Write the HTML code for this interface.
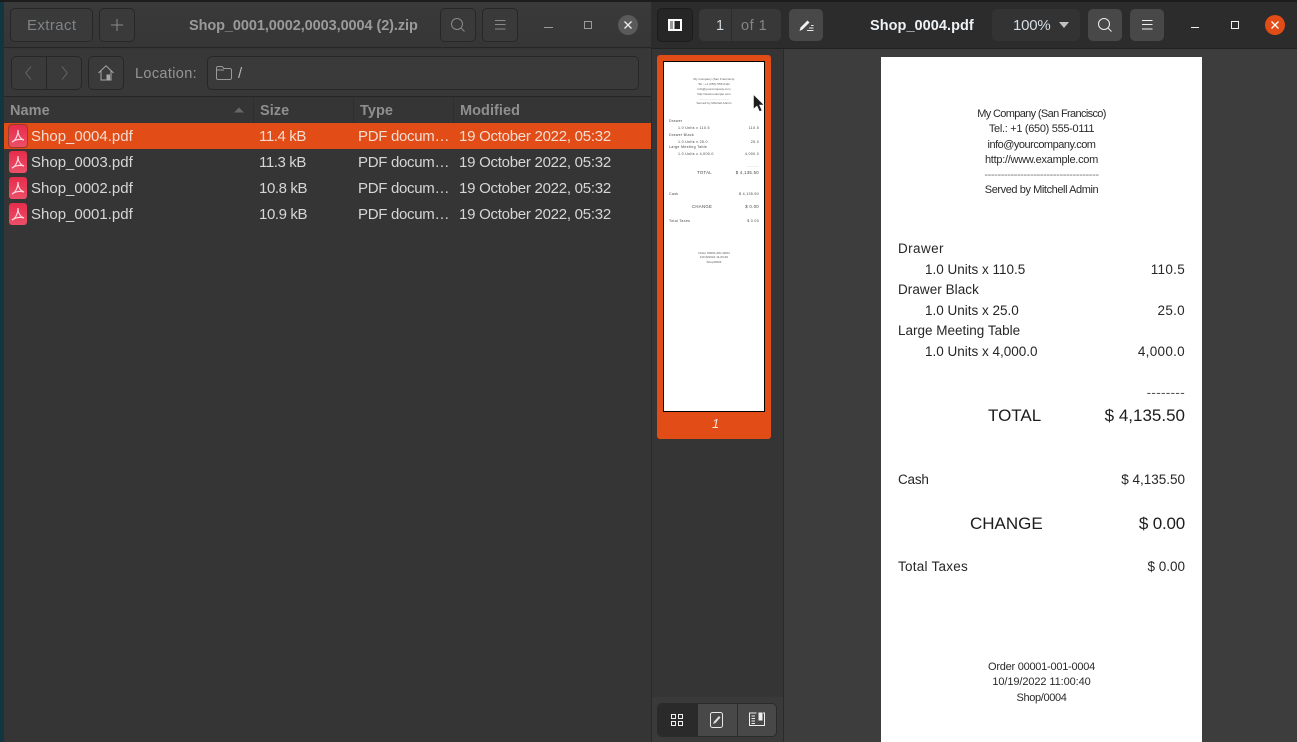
<!DOCTYPE html>
<html><head><meta charset="utf-8">
<style>
*{box-sizing:border-box}
html,body{margin:0;padding:0;width:1297px;height:742px;overflow:hidden;background:#2c2c2c;font-family:"Liberation Sans",sans-serif}
.a{position:absolute}
.t{position:absolute;white-space:nowrap;line-height:18px;height:18px;margin-top:1px}
.btn{position:absolute;border:1px solid #272727;border-radius:5px}
.f{font-size:15px;color:#d6d6d6;letter-spacing:0}
.s{letter-spacing:-.4px}
.ty{letter-spacing:-.3px}
.d{letter-spacing:-.26px}
.sel{color:#f3ddd2}
.h{font-size:14.5px;font-weight:bold;color:#8f8f8f;letter-spacing:.05px}
.ic{position:absolute;left:9px;width:18px;height:22px;border-radius:3px;background:linear-gradient(#e62c4b,#ec4f68)}
svg{position:absolute;overflow:visible}
.r{position:absolute;white-space:nowrap;color:#262626;font-size:13.5px;line-height:16px;height:16px;letter-spacing:0;margin-top:1px}
.rr{text-align:right;right:17px}
.c{text-align:center;left:0;width:321px;font-size:11px;color:#2a2a2a}
.b{font-size:17px;line-height:20px;height:20px;color:#1c1c1c;letter-spacing:0}
.m{position:absolute;white-space:nowrap;font-size:3.6px;line-height:4px;height:4px;color:#444;letter-spacing:.3px}
.mr{right:5px}
.mc{left:0;width:100px;text-align:center;font-size:3px;color:#555;letter-spacing:.05px}
</style></head><body>

<!-- Left window -->
<div class="a" style="left:0;top:0;width:4px;height:742px;background:#12363f"></div>
<div class="a" style="left:4px;top:0;width:647px;height:742px;background:#353535"></div>
<div class="a" style="left:0;top:0;width:1297px;height:2px;background:#1c1c1c"></div>
<div class="a" style="left:4px;top:2px;width:647px;height:46px;background:linear-gradient(#3a3a3a,#363636);border-bottom:1px solid #262626"></div>
<div class="a" style="left:4px;top:49px;width:647px;height:48px;background:#383838;border-bottom:1px solid #262626"></div>

<div class="btn" style="left:10px;top:8px;width:83px;height:34px;background:#3a3a3a"></div>
<div class="t" style="left:27px;top:16px;font-size:15px;color:#7f8488;letter-spacing:.4px">Extract</div>
<div class="btn" style="left:99px;top:8px;width:36px;height:34px;background:#3a3a3a"></div>
<svg style="left:111px;top:19px" width="12" height="12"><path d="M6 0V12M0 6H12" stroke="#8a8a8a" stroke-width="1"/></svg>

<div class="t" style="left:189px;top:16px;font-size:14.5px;font-weight:bold;color:#9a9a9a;letter-spacing:-.08px">Shop_0001,0002,0003,0004 (2).zip</div>

<div class="btn" style="left:440px;top:8px;width:36px;height:34px;background:#3a3a3a"></div>
<svg style="left:451px;top:18px" width="14" height="14"><circle cx="6" cy="6" r="5.5" fill="none" stroke="#8a8a8a"/><path d="M10 10L13.5 13.5" stroke="#8a8a8a"/></svg>
<div class="btn" style="left:482px;top:8px;width:36px;height:34px;background:#3a3a3a"></div>
<svg style="left:495px;top:19px" width="11" height="11"><path d="M0 1.5H10.5M0 5.5H10.5M0 10H10.5" stroke="#8a8a8a"/></svg>

<div class="a" style="left:544px;top:27px;width:9px;height:1px;background:#9a9a9a"></div>
<div class="a" style="left:584px;top:21px;width:8px;height:8px;border:1px solid #9a9a9a"></div>
<div class="a" style="left:618px;top:15px;width:20px;height:20px;border-radius:50%;background:#5a5a5a"></div>
<svg style="left:624px;top:21px" width="8" height="8"><path d="M.5 .5L7.5 7.5M7.5 .5L.5 7.5" stroke="#eee" stroke-width="1.3"/></svg>

<!-- location bar -->
<div class="btn" style="left:11px;top:56px;width:71px;height:34px;background:#3a3a3a"></div>
<div class="a" style="left:46px;top:57px;width:1px;height:32px;background:#272727"></div>
<svg style="left:25px;top:66px" width="8" height="14"><path d="M6 .5L.8 7L6 13.5" fill="none" stroke="#666"/></svg>
<svg style="left:61px;top:66px" width="8" height="14"><path d="M1 .5L6.2 7L1 13.5" fill="none" stroke="#666"/></svg>
<div class="btn" style="left:88px;top:56px;width:36px;height:34px;background:#3a3a3a"></div>
<svg style="left:98px;top:65px" width="16" height="16"><path d="M.5 8L8 .8L15.5 8M3 6V15H13V6" fill="none" stroke="#a8a8a8"/><rect x="8.5" y="9.5" width="3.5" height="5.5" fill="#a8a8a8"/></svg>
<div class="t" style="left:135px;top:64px;font-size:14.5px;color:#959595;letter-spacing:.35px">Location:</div>
<div class="btn" style="left:207px;top:56px;width:432px;height:34px;background:#3a3a3a"></div>
<svg style="left:216px;top:66px" width="16" height="14"><path d="M2 .5H6L8 2.5H14A1.5 1.5 0 0 1 15.5 4V12A1.5 1.5 0 0 1 14 13.5H2A1.5 1.5 0 0 1 .5 12V2A1.5 1.5 0 0 1 2 .5ZM.5 4H8" fill="none" stroke="#999"/></svg>
<div class="t" style="left:238px;top:64px;font-size:15px;color:#b5b5b5">/</div>

<!-- headers -->
<div class="a" style="left:4px;top:98px;width:647px;height:25px;background:#353535"></div>
<div class="t h" style="left:10px;top:101px">Name</div>
<svg style="left:234px;top:107px" width="10" height="6"><path d="M0 5.5L5 .5L10 5.5Z" fill="#666"/></svg>
<div class="a" style="left:253px;top:98px;width:1px;height:25px;background:#2e2e2e"></div>
<div class="t h" style="left:260px;top:101px">Size</div>
<div class="a" style="left:353px;top:98px;width:1px;height:25px;background:#2e2e2e"></div>
<div class="t h" style="left:360px;top:101px">Type</div>
<div class="a" style="left:453px;top:98px;width:1px;height:25px;background:#2e2e2e"></div>
<div class="t h" style="left:460px;top:101px">Modified</div>

<!-- rows -->
<div class="a" style="left:4px;top:123px;width:647px;height:26px;background:#e24c16"></div>

<div class="ic" style="top:125px;outline:1px solid #9c3a2a"></div>
<svg style="left:11px;top:128px" width="14" height="16"><path d="M1 14C4 13 7 8 7 2C7 8 10 11 13 12C10 11 5 11 1 14Z" fill="none" stroke="#ffd9df" stroke-width="1.2"/></svg>
<div class="t f sel" style="left:31px;top:127px">Shop_0004.pdf</div>
<div class="t f s sel" style="left:259px;top:127px">11.4 kB</div>
<div class="t f ty sel" style="left:358px;top:127px">PDF docum…</div>
<div class="t f d sel" style="left:459px;top:127px">19 October 2022, 05:32</div>

<div class="ic" style="top:151px"></div>
<svg style="left:11px;top:154px" width="14" height="16"><path d="M1 14C4 13 7 8 7 2C7 8 10 11 13 12C10 11 5 11 1 14Z" fill="none" stroke="#ffd9df" stroke-width="1.2"/></svg>
<div class="t f" style="left:31px;top:153px">Shop_0003.pdf</div>
<div class="t f s" style="left:259px;top:153px">11.3 kB</div>
<div class="t f ty" style="left:358px;top:153px">PDF docum…</div>
<div class="t f d" style="left:459px;top:153px">19 October 2022, 05:32</div>

<div class="ic" style="top:177px"></div>
<svg style="left:11px;top:180px" width="14" height="16"><path d="M1 14C4 13 7 8 7 2C7 8 10 11 13 12C10 11 5 11 1 14Z" fill="none" stroke="#ffd9df" stroke-width="1.2"/></svg>
<div class="t f" style="left:31px;top:179px">Shop_0002.pdf</div>
<div class="t f s" style="left:259px;top:179px">10.8 kB</div>
<div class="t f ty" style="left:358px;top:179px">PDF docum…</div>
<div class="t f d" style="left:459px;top:179px">19 October 2022, 05:32</div>

<div class="ic" style="top:203px"></div>
<svg style="left:11px;top:206px" width="14" height="16"><path d="M1 14C4 13 7 8 7 2C7 8 10 11 13 12C10 11 5 11 1 14Z" fill="none" stroke="#ffd9df" stroke-width="1.2"/></svg>
<div class="t f" style="left:31px;top:205px">Shop_0001.pdf</div>
<div class="t f s" style="left:259px;top:205px">10.9 kB</div>
<div class="t f ty" style="left:358px;top:205px">PDF docum…</div>
<div class="t f d" style="left:459px;top:205px">19 October 2022, 05:32</div>

<!-- Right window -->
<div class="a" style="left:651px;top:2px;width:646px;height:47px;background:#2c2c2c;border-bottom:1px solid #222"></div>
<div class="a" style="left:651px;top:49px;width:133px;height:693px;background:#353535;border-left:1px solid #2a2a2a;border-right:1px solid #2a2a2a"></div>
<div class="a" style="left:784px;top:49px;width:513px;height:693px;background:#3d3d3d"></div>
<div class="a" style="left:652px;top:697px;width:131px;height:45px;background:#3a3a3a"></div>

<div class="btn" style="left:657px;top:8px;width:36px;height:34px;background:#262626;border-color:#1c1c1c"></div>
<svg style="left:668px;top:19px" width="14" height="12"><rect x="1" y="1" width="12" height="10" fill="none" stroke="#fff" stroke-width="2"/><rect x="2" y="2" width="3" height="8" fill="#999"/><rect x="5" y="1" width="1.5" height="10" fill="#fff"/></svg>
<div class="a" style="left:699px;top:9px;width:32px;height:32px;border-radius:5px 0 0 5px;background:#383838"></div>
<div class="a" style="left:732px;top:9px;width:49px;height:32px;border-radius:0 5px 5px 0;background:#383838"></div>
<div class="t" style="left:716px;top:16px;font-size:14.5px;color:#cfd6dc">1</div>
<div class="t" style="left:741px;top:16px;font-size:14.5px;color:#858585;letter-spacing:.5px">of 1</div>
<div class="a" style="left:789px;top:9px;width:34px;height:32px;border-radius:5px;background:#484848"></div>
<svg style="left:799px;top:18px" width="15" height="14"><path d="M.5 13L1.5 9.5L8.5 2.5L10.5 4.5L3.5 11.5Z" fill="#f2f2f2"/><path d="M8 12.5H14.5M10 10H14.5M12 7.5H14.5" stroke="#e8e8e8"/></svg>

<div class="t" style="left:870px;top:16px;font-size:14.5px;font-weight:bold;color:#eef2f5;letter-spacing:.05px">Shop_0004.pdf</div>

<div class="a" style="left:992px;top:9px;width:88px;height:32px;border-radius:5px;background:#333"></div>
<div class="t" style="left:1013px;top:16px;font-size:15px;color:#d4dde5;letter-spacing:-.2px">100%</div>
<svg style="left:1059px;top:22px" width="11" height="6"><path d="M0 0H10L5 6Z" fill="#c2c2c2"/></svg>
<div class="a" style="left:1088px;top:9px;width:34px;height:32px;border-radius:5px;background:#484848"></div>
<svg style="left:1098px;top:18px" width="14" height="14"><circle cx="6" cy="6" r="5.5" fill="none" stroke="#eee"/><path d="M10 10L13.5 13.5" stroke="#eee"/></svg>
<div class="a" style="left:1130px;top:9px;width:34px;height:32px;border-radius:5px;background:#484848"></div>
<svg style="left:1142px;top:19px" width="11" height="11"><path d="M0 1.5H10.5M0 5.5H10.5M0 10H10.5" stroke="#eee"/></svg>
<div class="a" style="left:1191px;top:27px;width:8px;height:1px;background:#f0f0f0"></div>
<div class="a" style="left:1231px;top:21px;width:8px;height:8px;border:1.5px solid #f0f0f0"></div>
<div class="a" style="left:1265px;top:15px;width:20px;height:20px;border-radius:50%;background:#e24c16"></div>
<svg style="left:1271px;top:21px" width="8" height="8"><path d="M.5 .5L7.5 7.5M7.5 .5L.5 7.5" stroke="#fff" stroke-width="1.3"/></svg>

<!-- Thumbnail -->
<div class="a" style="left:657px;top:55px;width:114px;height:384px;background:#e24c16;border-radius:3px"></div>
<div class="a" style="left:663px;top:61px;width:102px;height:351px;background:#fff;border:1px solid #000;overflow:hidden">
  <div class="m mc" style="top:15px">My Company (San Francisco)</div>
  <div class="m mc" style="top:20px">Tel.: +1 (650) 555-0111</div>
  <div class="m mc" style="top:25px">info@yourcompany.com</div>
  <div class="m mc" style="top:30px">http://www.example.com</div>
  <div class="m mc" style="top:35px;color:#aaa">-----------------------------</div>
  <div class="m mc" style="top:38.5px">Served by Mitchell Admin</div>
  <div class="m" style="left:5px;top:57px">Drawer</div>
  <div class="m" style="left:14px;top:64px">1.0 Units x 110.5</div><div class="m mr" style="top:64px">110.5</div>
  <div class="m" style="left:5px;top:71px">Drawer Black</div>
  <div class="m" style="left:14px;top:78px">1.0 Units x 25.0</div><div class="m mr" style="top:78px">25.0</div>
  <div class="m" style="left:5px;top:83px">Large Meeting Table</div>
  <div class="m" style="left:14px;top:90px">1.0 Units x 4,000.0</div><div class="m mr" style="top:90px">4,000.0</div>
  <div class="m mr" style="top:102px;color:#aaa">--------</div>
  <div class="m" style="left:33px;top:109px;font-size:4.3px">TOTAL</div><div class="m mr" style="top:109px;font-size:4.3px">$ 4,135.50</div>
  <div class="m" style="left:5px;top:130px">Cash</div><div class="m mr" style="top:130px">$ 4,135.50</div>
  <div class="m" style="left:28px;top:143px;font-size:4.3px">CHANGE</div><div class="m mr" style="top:143px;font-size:4.3px">$ 0.00</div>
  <div class="m" style="left:5px;top:157px">Total Taxes</div><div class="m mr" style="top:157px">$ 0.00</div>
  <div class="m mc" style="top:189px">Order 00001-001-0004</div>
  <div class="m mc" style="top:193px">10/19/2022 11:00:40</div>
  <div class="m mc" style="top:198px">Shop/0004</div>
</div>
<div class="t" style="left:712px;top:414px;font-size:13px;font-style:italic;color:#f5e3da">1</div>
<svg style="left:753px;top:94px" width="12" height="19"><path d="M.5 .5V15L4 12L6.5 17.5L9 16.5L6.5 11H11Z" fill="#1c1c1c" stroke="#eee" stroke-width=".6"/></svg>

<!-- bottom tabs -->
<div class="a" style="left:657px;top:703px;width:120px;height:34px;border-radius:5px;background:#484848;border:1px solid #2a2a2a"></div>
<div class="a" style="left:658px;top:704px;width:40px;height:32px;border-radius:4px 0 0 4px;background:#2a2a2a"></div>
<div class="a" style="left:737px;top:704px;width:1px;height:32px;background:#2c2c2c"></div>
<svg style="left:671px;top:714px" width="12" height="12"><path d="M.5 .5H4.5V4.5H.5ZM7.5 .5H11.5V4.5H7.5ZM.5 7.5H4.5V11.5H.5ZM7.5 7.5H11.5V11.5H7.5Z" fill="none" stroke="#f0f0f0"/></svg>
<svg style="left:710px;top:712px" width="13" height="16"><rect x=".5" y=".5" width="12" height="15" rx="2" fill="none" stroke="#e8e8e8"/><path d="M3 12L4 9.5L9 4L10.5 5.5L5.5 11Z" fill="#e0e0e0"/></svg>
<svg style="left:749px;top:712px" width="16" height="15"><path d="M7.5 1H.5V13.5H15.5V1H14" fill="none" stroke="#eee"/><rect x="9.5" y=".5" width="4" height="8" fill="#eee"/><path d="M2.5 4H6M2.5 6.5H6M2.5 9H6M2.5 11.5H6" stroke="#eee"/></svg>

<!-- Page -->
<div class="a" style="left:881px;top:57px;width:321px;height:685px;background:#fff;overflow:hidden">
  <div class="r c" style="top:48px;letter-spacing:-.65px">My Company (San Francisco)</div>
  <div class="r c" style="top:63px;letter-spacing:-.31px">Tel.: +1 (650) 555-0111</div>
  <div class="r c" style="top:79px;letter-spacing:-.5px">info@yourcompany.com</div>
  <div class="r c" style="top:94px;letter-spacing:-.28px">http://www.example.com</div>
  <div class="r c" style="top:109px;color:#777;letter-spacing:-.4px">-----------------------------------</div>
  <div class="r c" style="top:124px;letter-spacing:-.42px">Served by Mitchell Admin</div>

  <div class="r" style="left:17px;top:183px;letter-spacing:.4px">Drawer</div>
  <div class="r" style="left:44px;top:204px">1.0 Units x 110.5</div><div class="r rr" style="top:204px;letter-spacing:.3px">110.5</div>
  <div class="r" style="left:17px;top:224px;letter-spacing:.05px">Drawer Black</div>
  <div class="r" style="left:44px;top:245px">1.0 Units x 25.0</div><div class="r rr" style="top:245px;letter-spacing:.3px">25.0</div>
  <div class="r" style="left:17px;top:265px">Large Meeting Table</div>
  <div class="r" style="left:44px;top:286px">1.0 Units x 4,000.0</div><div class="r rr" style="top:286px;letter-spacing:.3px">4,000.0</div>
  <div class="r rr" style="top:327px;color:#555;letter-spacing:.3px">--------</div>
  <div class="r b" style="left:107px;top:348px">TOTAL</div><div class="r b rr" style="top:348px">$ 4,135.50</div>
  <div class="r" style="left:17px;top:414px;letter-spacing:-.2px">Cash</div><div class="r rr" style="top:414px">$ 4,135.50</div>
  <div class="r b" style="left:89px;top:456px">CHANGE</div><div class="r b rr" style="top:456px;letter-spacing:-.2px">$ 0.00</div>
  <div class="r" style="left:17px;top:501px;letter-spacing:.25px">Total Taxes</div><div class="r rr" style="top:501px">$ 0.00</div>
  <div class="r c" style="top:601px;letter-spacing:-.25px">Order 00001-001-0004</div>
  <div class="r c" style="top:616px;letter-spacing:-.1px">10/19/2022 11:00:40</div>
  <div class="r c" style="top:632px;letter-spacing:-.35px">Shop/0004</div>
</div>
</body></html>
